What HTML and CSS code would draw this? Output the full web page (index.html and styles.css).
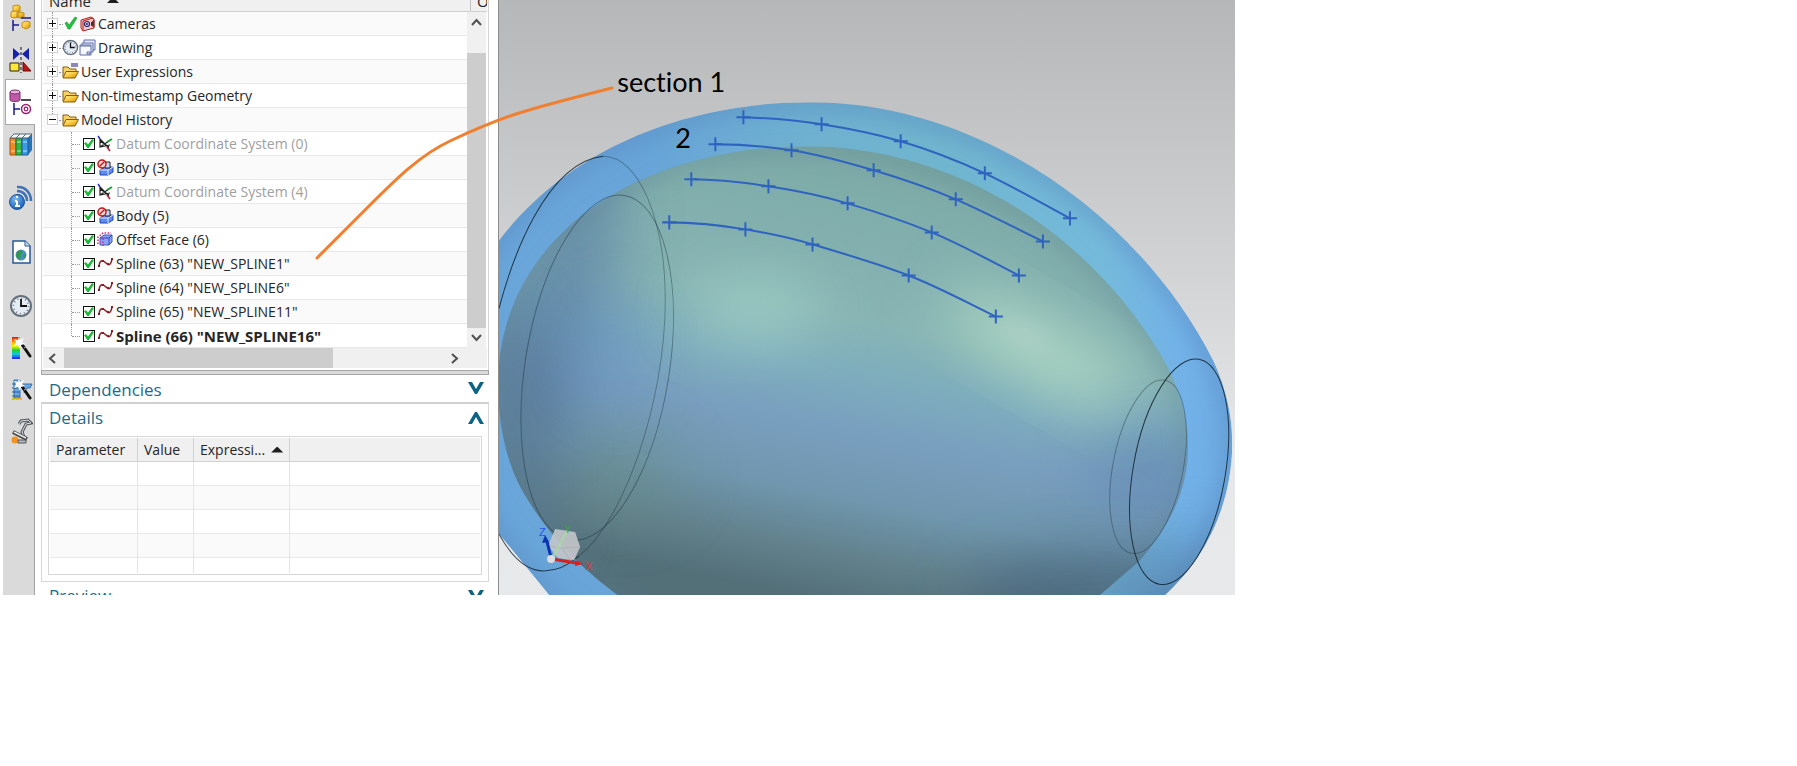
FILE: index.html
```html
<!DOCTYPE html>
<html lang="en">
<head>
<meta charset="utf-8">
<title>Part Navigator</title>
<link rel="stylesheet" href="styles.css">
</head>
<body>
<svg class="defs" width="0" height="0" aria-hidden="true">
  <defs>
    <linearGradient id="gold" x1="0" y1="0" x2="1" y2="1"><stop offset="0" stop-color="#fff0a0"/><stop offset=".5" stop-color="#f8c93c"/><stop offset="1" stop-color="#c98a10"/></linearGradient>
    <radialGradient id="blueball" cx=".4" cy=".3" r=".7"><stop offset="0" stop-color="#7fb8f0"/><stop offset="1" stop-color="#1560b8"/></radialGradient>
    <linearGradient id="rainbow" x1="0" y1="0" x2="0" y2="1"><stop offset="0" stop-color="#f01010"/><stop offset=".25" stop-color="#ffb000"/><stop offset=".42" stop-color="#f4f400"/><stop offset=".6" stop-color="#20d030"/><stop offset=".78" stop-color="#10c8f0"/><stop offset="1" stop-color="#2020e0"/></linearGradient>
    <symbol id="folder" viewBox="0 0 17 17"><path d="M1 14V4h5l2 2h6v3" fill="#f5d36a" stroke="#8a5c10"/><path d="M1 15 4 8.500h12.500L13 15z" fill="url(#gold)" stroke="#8a5c10"/></symbol>
    <symbol id="csys" viewBox="0 0 17 17"><path d="M3 4v8l10-2M3 4l9 9M3 12l9-6M3 6l9 6" fill="none" stroke="#222" stroke-width="1.200"/><path d="M1 1l2 3" stroke="#2233cc" stroke-width="1.500"/><path d="M10 7l5-3" stroke="#18a030" stroke-width="2"/><path d="M10 12l3 4" stroke="#b02020" stroke-width="1.500"/></symbol>
    <symbol id="body" viewBox="0 0 17 17"><path d="M3 11l5-3h8v5l-5 3H3z" fill="#5b8df0" stroke="#2a45a0"/><path d="M3 11h8l5-3M11 11v5" fill="none" stroke="#dce6ff"/><path d="M8 3h5v6H8z" fill="#c4d6ff" stroke="#222"/><circle cx="5" cy="5" r="4" fill="#fbdada" stroke="#c01818" stroke-width="1.500"/><path d="M2.500 7.500l5-5" stroke="#c01818" stroke-width="1.500"/></symbol>
    <symbol id="offset" viewBox="0 0 17 17"><path d="M3 7l4-3h8v7l-3 3H3z" fill="#8ba3f5" stroke="#4055c8"/><path d="M3 7h9v7M12 7l3-3" fill="none" stroke="#3348b8"/><path d="M1 13V6l5-4h8M6 15V6" fill="none" stroke="#e02868" stroke-width="1.500" stroke-dasharray="1.500 1.500"/></symbol>
    <symbol id="spline" viewBox="0 0 17 17"><path d="M2 11C3 4 6 5 9 8s5 2 6-4" fill="none" stroke="#8e1c24" stroke-width="1.500"/><path d="M1 10h2v2H1zM5 5h2v2H5zM10 8h2v2h-2zM14 3h2v2h-2z" fill="#8e1c24"/></symbol>
    <symbol id="clock" viewBox="0 0 24 24"><circle cx="12" cy="12" r="10" fill="#e4ecf4" stroke="#66717c" stroke-width="2"/><circle cx="12" cy="12" r="7.500" fill="none" stroke="#667" stroke-width="1.500" stroke-dasharray="1 2.930"/><path d="M12 5v7h6" fill="none" stroke="#111" stroke-width="1.800"/></symbol>
    <symbol id="tick" viewBox="0 0 17 17"><path d="M3 8l2-1 2 3 6-8 2 1-7 11H6z" fill="#23c03c" stroke="#17952b" stroke-width=".6"/></symbol>
    <symbol id="camera" viewBox="0 0 17 17"><path d="M2 5l10-3 3 2v9L4 16l-2-3z" fill="#f3caca" stroke="#b32020"/><path d="M4 6v9M4 6l10-3M12 8l3-3v7l-3-2" stroke="#b32020" fill="#333"/><circle cx="8" cy="9" r="2.500" fill="#dde" stroke="#302070" stroke-width="1.200"/><circle cx="8" cy="9" r="1" fill="#302070"/></symbol>
    <symbol id="sheets" viewBox="0 0 17 17"><path d="M5 1h11v10H5z" fill="#e9edfb" stroke="#5d6da8"/><path d="M3 4h11v9H3z" fill="#e9edfb" stroke="#5d6da8"/><path d="M1 6h11v10H1z" fill="#f6f8ff" stroke="#5d6da8"/><path d="M1 7h11M8 13h3v2H8z" fill="none" stroke="#5d6da8"/></symbol>
    <symbol id="wand" viewBox="0 0 24 28"><path d="M12 9l9 13" stroke="#111" stroke-width="3" stroke-linecap="round"/><path d="M10 2l1 4 4-2-2 4 3 2-4 1-1 4-2-4-4 1 2-4-2-3 4 1z" fill="#fff"/><path d="M15 14l2-1" stroke="#aaa"/></symbol>
  </defs>
</svg>

<main class="app">
  <nav class="rail" aria-label="Resource bar">
    <div class="rail-group tabs">
      <button class="rail-btn" aria-label="Assembly Navigator"><svg viewBox="0 0 24 28"><g fill="url(#gold)" stroke="#c48a10"><path d="M4 2l4-1 3 1v5l-4 1-3-1z"/><path d="M2 8l4-1 3 1v5l-4 1-3-1zM8 9l4-1 3 1v4l-4 1-3-1z"/><path d="M13 19l4-2 4 1v5l-4 2-4-2z"/></g><path d="M4 16v11M4 21h6M12 14h10" stroke="#1a1a90" stroke-width="1.500"/></svg></button>
      <button class="rail-btn" aria-label="Constraint Navigator"><svg viewBox="0 0 24 28"><path d="M4 2l7 6-7 6zM20 2l-7 6 7 6z" fill="#1620b0"/><path d="M12 1v26" stroke="#111" stroke-dasharray="3 2"/><path d="M1 17h9v8H1z" fill="#ffe838" stroke="#222"/><path d="M14 16l8 9h-8z" fill="#c01414" stroke="#601010"/></svg></button>
      <button class="rail-btn active" aria-label="Part Navigator"><svg viewBox="0 0 24 28"><path d="M1 4v8c1 2 9 2 10 0V4z" fill="#c05aa8" stroke="#7d2a70"/><ellipse cx="6" cy="4" rx="5" ry="2" fill="#e9b4dc" stroke="#7d2a70"/><path d="M12 12h10" stroke="#111" stroke-width="1.500"/><path d="M5 15v12M5 21h6" stroke="#1a1a90" stroke-width="1.500"/><circle cx="17" cy="21" r="4.500" fill="#fff" stroke="#98206c" stroke-width="1.500"/><circle cx="17" cy="21" r="1.800" fill="none" stroke="#98206c" stroke-width="1.200"/></svg></button>
      <button class="rail-btn" aria-label="Reuse Library"><svg viewBox="0 0 24 28"><path d="M1 8l4-4h18v16l-4 5H1z" fill="#2773b8"/><path d="M1 8h6v17H1z" fill="#ee8a28" stroke="#a8540c"/><path d="M7 8h6v17H7z" fill="#35b53f" stroke="#16762a"/><path d="M13 8h6v17h-6z" fill="#3a9ae4" stroke="#1b5c9c"/><path d="M1 8l4-4h6L7 8zM7 8l4-4h6l-4 4zM13 8l4-4h6l-4 4z" fill="#f4f8fa" stroke="#567"/><path d="M2 12h4M8 12h4M14 12h4M2 21h4M8 21h4M14 21h4" stroke="#fff" stroke-opacity=".7"/></svg></button>
    </div>
    <div class="rail-group tools">
      <button class="rail-btn" aria-label="HD3D Tools"><svg viewBox="0 0 24 28"><path d="M8 3c8-1 14 6 14 14M8 7c6 0 10 4 10 10M8 11c4 0 6 3 6 6" fill="none" stroke="#3e72b4" stroke-width="2.500"/><circle cx="8" cy="18" r="7.500" fill="url(#blueball)" stroke="#1a559c"/><path d="M8 17v5M6 22h5M6 17h2M7 13h2" stroke="#fff" stroke-width="2"/></svg></button>
      <button class="rail-btn" aria-label="Web Browser"><svg viewBox="0 0 24 28"><path d="M4 3h12l5 5v17H4z" fill="#fff" stroke="#28579c" stroke-width="1.500"/><path d="M16 3v5h5" fill="#cfe0f6" stroke="#28579c"/><circle cx="12" cy="17" r="5.500" fill="#4b8fd0"/><path d="M8 14l4-2 2 3-3 2 1 3-2 1-3-3zM14 17l3-1-2 5z" fill="#2e9a3c"/></svg></button>
      <button class="rail-btn" aria-label="History"><svg viewBox="0 0 24 28"><use href="#clock" y="2" width="24" height="24"/></svg></button>
    </div>
    <div class="rail-group extras">
      <button class="rail-btn" aria-label="System Materials"><svg viewBox="0 0 24 28"><path d="M3 3h8v22H3z" fill="url(#rainbow)"/><use href="#wand" width="24" height="28"/></svg></button>
      <button class="rail-btn" aria-label="System Visualization"><svg viewBox="0 0 24 28"><path d="M5 4h6v18H5zM13 8h10l-2 4h-3l-3 5" fill="#6ca7df" stroke="#3470b0"/><path d="M3 8h8M3 12h8M3 16h8M3 20h8" stroke="#24619f"/><path d="M3 23h10" stroke="#d8b828" stroke-width="2" stroke-dasharray="3 1"/><use href="#wand" width="24" height="28"/></svg></button>
      <button class="rail-btn" aria-label="Process Studio"><svg viewBox="0 0 24 28"><path d="M10 6l2-3 7-1 3 3-5 1-4 8 2 5" fill="none" stroke="#4c5258" stroke-width="3"/><path d="M10 6l2-3 7-1 3 3-5 1-4 8 2 5" fill="none" stroke="#e4e6e9"/><path d="M4 14l14 7" stroke="#444" stroke-width="4"/><path d="M5 14l12 6" stroke="#eee" stroke-width="1.500"/><circle cx="6" cy="22" r="3.500" fill="#f49220"/><path d="M9 22h8v3H9z" fill="#b8bcc4" stroke="#555"/></svg></button>
    </div>
  </nav>

  <section class="panel">
    <div class="tree-box">
      <div class="tree-head"><span class="name">Name</span><i class="sort"></i><span class="col2">O</span></div>
      <div class="tree-body">
        <ul class="tree">
          <li class="row root first"><button class="exp" aria-label="Expand"></button><svg class="ic"><use href="#tick"/></svg><svg class="ic"><use href="#camera"/></svg><span>Cameras</span></li>
          <li class="row root"><button class="exp" aria-label="Expand"></button><svg class="ic"><use href="#clock"/></svg><svg class="ic"><use href="#sheets"/></svg><span>Drawing</span></li>
          <li class="row root"><button class="exp" aria-label="Expand"></button><svg class="ic"><use href="#folder"/><path d="M9 1h7M9 3h7" stroke="#1b1b70"/></svg><span>User Expressions</span></li>
          <li class="row root"><button class="exp" aria-label="Expand"></button><svg class="ic"><use href="#folder"/></svg><span>Non-timestamp Geometry</span></li>
          <li class="row root end"><button class="exp open" aria-label="Collapse"></button><svg class="ic"><use href="#folder"/></svg><span>Model History</span></li>
          <li class="row child dim"><input type="checkbox" id="f0" checked><svg class="ic"><use href="#csys"/></svg><label for="f0">Datum Coordinate System (0)</label></li>
          <li class="row child"><input type="checkbox" id="f3" checked><svg class="ic"><use href="#body"/></svg><label for="f3">Body (3)</label></li>
          <li class="row child dim"><input type="checkbox" id="f4" checked><svg class="ic"><use href="#csys"/></svg><label for="f4">Datum Coordinate System (4)</label></li>
          <li class="row child"><input type="checkbox" id="f5" checked><svg class="ic"><use href="#body"/></svg><label for="f5">Body (5)</label></li>
          <li class="row child"><input type="checkbox" id="f6" checked><svg class="ic"><use href="#offset"/></svg><label for="f6">Offset Face (6)</label></li>
          <li class="row child"><input type="checkbox" id="f63" checked><svg class="ic"><use href="#spline"/></svg><label for="f63">Spline (63) "NEW_SPLINE1"</label></li>
          <li class="row child"><input type="checkbox" id="f64" checked><svg class="ic"><use href="#spline"/></svg><label for="f64">Spline (64) "NEW_SPLINE6"</label></li>
          <li class="row child"><input type="checkbox" id="f65" checked><svg class="ic"><use href="#spline"/></svg><label for="f65">Spline (65) "NEW_SPLINE11"</label></li>
          <li class="row child end current"><input type="checkbox" id="f66" checked><svg class="ic"><use href="#spline"/></svg><label for="f66">Spline (66) "NEW_SPLINE16"</label></li>
        </ul>
        <div class="vscroll">
          <button aria-label="Scroll up"><svg width="11" height="8"><path d="M1 7l4.500-5L10 7" /></svg></button>
          <i class="thumb"></i>
          <button aria-label="Scroll down"><svg width="11" height="8"><path d="M1 1l4.500 5L10 1"/></svg></button>
        </div>
      </div>
      <div class="hscroll">
        <button aria-label="Scroll left"><svg width="8" height="11"><path d="M7 1L2 5.500 7 10"/></svg></button>
        <i class="thumb"></i>
        <button aria-label="Scroll right"><svg width="8" height="11"><path d="M1 1l5 4.500L1 10"/></svg></button>
      </div>
    </div>
    <div class="splitter"></div>
    <button class="fold deps">Dependencies<svg width="16" height="12"><path d="M0 0h4l4 7 4-7h4L9 12H7z"/></svg></button>
    <section class="details">
      <button class="fold">Details<svg width="16" height="12"><path d="M0 12h4l4-7 4 7h4L9 0H7z"/></svg></button>
      <div class="table-box">
        <table>
          <colgroup><col class="c1"><col class="c2"><col class="c3"><col></colgroup>
          <thead><tr><th>Parameter</th><th>Value</th><th>Expressi...<i class="sort"></i></th><th></th></tr></thead>
          <tbody>
            <tr><td></td><td></td><td></td><td></td></tr>
            <tr><td></td><td></td><td></td><td></td></tr>
            <tr><td></td><td></td><td></td><td></td></tr>
            <tr><td></td><td></td><td></td><td></td></tr>
            <tr class="cut"><td></td><td></td><td></td><td></td></tr>
          </tbody>
        </table>
      </div>
    </section>
    <div class="preview"><button class="fold">Preview<svg width="16" height="12"><path d="M0 0h4l4 7 4-7h4L9 12H7z"/></svg></button></div>
  </section>

  <section class="view" aria-label="Graphics window">
    <svg class="scene" viewBox="500 0 735 594" preserveAspectRatio="xMinYMin slice">
      <defs>
        <linearGradient id="shell" gradientUnits="userSpaceOnUse" x1="500" y1="0" x2="1235" y2="0"><stop offset="0" stop-color="#6aa6da"/><stop offset=".2" stop-color="#68a4d8"/><stop offset=".42" stop-color="#6fb1d0"/><stop offset=".6" stop-color="#70b5ce"/><stop offset=".82" stop-color="#75badb"/><stop offset=".93" stop-color="#72b2e8"/><stop offset="1" stop-color="#6eaae2"/></linearGradient>
        <linearGradient id="core" gradientUnits="userSpaceOnUse" x1="875" y1="130" x2="785" y2="590"><stop offset="0" stop-color="#79a5a1"/><stop offset=".15" stop-color="#7fadaa"/><stop offset=".4" stop-color="#88b5b4"/><stop offset=".52" stop-color="#7eadbd"/><stop offset=".64" stop-color="#799fbf"/><stop offset=".78" stop-color="#7097ae"/><stop offset=".9" stop-color="#62818c"/><stop offset="1" stop-color="#537079"/></linearGradient>
        <filter id="b14" x="-50%" y="-50%" width="200%" height="200%"><feGaussianBlur stdDeviation="10"/></filter>
        <filter id="b30" x="-80%" y="-80%" width="260%" height="260%"><feGaussianBlur stdDeviation="30"/></filter>
        <path id="outerShape" d="M480 266L500 240C573 145 690 102 812 102C980 102 1140 215 1213 360C1226 388 1232 415 1232 442C1232 510 1200 562 1165 594L1100 640H600L550 594Q523 561 500 533L480 500Z"/>
        <path id="innerShape" d="M499 385C499 235 640 146 807 146C950 146 1085 228 1160 353Q1188 400 1188 445Q1188 495 1157 537Q1148 551 1137 562L1100 594L1050 640H670L618 594Q580 566 553 533Q535 511 521 486Q500 445 499 385Z"/>
        <clipPath id="outerClip"><use href="#outerShape"/></clipPath>
        <clipPath id="innerClip"><use href="#innerShape"/></clipPath>
      </defs>
      <g clip-path="url(#outerClip)">
        <use href="#outerShape" fill="url(#shell)"/>
        <use href="#outerShape" fill="none" stroke="#5688c0" stroke-width="16" stroke-opacity=".55" filter="url(#b14)"/>
        <path d="M1080 660V540H1240V660z" fill="#4e7396" opacity=".5" filter="url(#b30)"/>
      </g>
      <g clip-path="url(#innerClip)">
        <use href="#innerShape" fill="url(#core)"/>
        <ellipse cx="620" cy="475" rx="60" ry="40" fill="#688c84" opacity=".5" filter="url(#b30)"/>
        <ellipse cx="560" cy="300" rx="50" ry="150" fill="#5b80a6" opacity=".7" transform="rotate(14 560 300)" filter="url(#b30)"/>
        <ellipse cx="520" cy="430" rx="35" ry="130" fill="#56768f" opacity=".75" transform="rotate(-8 520 430)" filter="url(#b30)"/>
        <ellipse cx="615" cy="350" rx="32" ry="50" fill="#6c98c6" opacity=".6" filter="url(#b30)"/>
        <ellipse cx="1150" cy="470" rx="60" ry="45" fill="#6288b4" opacity=".7" filter="url(#b30)"/>
        <ellipse cx="755" cy="310" rx="65" ry="28" fill="#a4d4c8" opacity=".8" filter="url(#b30)"/>
        <ellipse cx="1040" cy="350" rx="105" ry="26" fill="#b2dcc6" transform="rotate(30 1040 350)" filter="url(#b30)"/>
        <ellipse cx="1025" cy="335" rx="30" ry="10" fill="#b4d0c8" opacity=".6" transform="rotate(28 1025 335)" filter="url(#b14)"/>
        <ellipse cx="1110" cy="600" rx="150" ry="45" fill="#43607a" opacity=".7" filter="url(#b30)"/>
        <use href="#innerShape" fill="none" stroke="#567a8c" stroke-width="12" stroke-opacity=".4" filter="url(#b14)"/>
      </g>
      <g fill="none" stroke="#12242f" stroke-width="1">
        <path d="M500 308C512 262 546 162 604 156" opacity=".85"/>
        <path d="M604 156C640 156 666 220 666 300C666 400 625 520 580 555" opacity=".35"/>
        <path d="M500 533Q520 570 545 570Q563 570 580 555" opacity=".8"/>
        <ellipse cx="598" cy="367" rx="72" ry="174" transform="rotate(9 598 367)" opacity=".4"/>
        <ellipse cx="1179" cy="471" rx="46" ry="114" transform="rotate(10 1179 471)" opacity=".85"/>
        <ellipse cx="1148" cy="466" rx="35" ry="88" transform="rotate(11 1148 466)" opacity=".35"/>
      </g>
      <g fill="none" stroke="#2f63c0" stroke-width="2">
        <path d="M744 117C770 118 796 120 822 124S874 133 901 141S957 160 985 173S1042 203 1070 218"/>
        <path d="M716 144C741 144 766 146 792 150S847 162 874 170S928 187 956 199S1014 227 1043 241"/>
        <path d="M692 179C718 179 743 182 769 186S821 195 848 203S903 220 932 232S990 260 1019 275"/>
        <path d="M670 222C695 222 722 225 746 229S786 236 813 244S878 263 909 275S967 302 996 316"/>
        <path d="M737 117h14m-7-7v14M815 124h14m-7-7v14M894 141h14m-7-7v14M978 173h14m-7-7v14M1063 218h14m-7-7v14M709 144h14m-7-7v14M785 150h14m-7-7v14M867 170h14m-7-7v14M949 199h14m-7-7v14M1036 241h14m-7-7v14M685 179h14m-7-7v14M762 186h14m-7-7v14M841 203h14m-7-7v14M925 232h14m-7-7v14M1012 275h14m-7-7v14M663 222h14m-7-7v14M739 229h14m-7-7v14M806 244h14m-7-7v14M902 275h14m-7-7v14M989 316h14m-7-7v14"/>
      </g>
      <path d="M556 528l20 3 5 15-6 13-16-2-10-12z" fill="#c3c6c9" opacity=".9"/>
      <path d="M549 545l14 2 18-1M563 547l8 12" fill="none" stroke="#b0b4b6"/>
      <path d="M554 556l14-26" stroke="#a8d8a4" stroke-width="2"/>
      <path d="M552 557l-4-16" stroke="#0b35b0" stroke-width="3"/><path d="M546 534l-3 8 7-1z" fill="#0b35b0"/>
      <path d="M553 558l24 4" stroke="#d52222" stroke-width="3"/><path d="M584 563l-8-4v6z" fill="#d52222"/>
      <circle cx="552" cy="558" r="4" fill="#dcdcdc"/>
      <g class="axis"><text x="540" y="535" fill="#2456e8">Z</text><text x="565" y="532" fill="#41a041">Y</text><text x="586" y="569" fill="#d83c3c">X</text></g>
      <g class="note"><text x="618" y="92">section 1</text><text x="676" y="148">2</text></g>
    </svg>
  </section>

  <svg class="leader" width="620" height="270" aria-hidden="true"><path d="M317 258L370 205C395 180 420 155 450 141S490 123 510 116S580 96 612 88"/></svg>
</main>
</body>
</html>
```
FILE: styles.css
```css
* { box-sizing: border-box; }
body { margin: 0; padding-right: 562px; background: #fff; color: #262626; font: 14px/24px "Open Sans", "Noto Sans", sans-serif; }
button { padding: 0; border: 0; background: none; font: inherit; color: inherit; }
.defs { position: absolute; }
.app { position: relative; display: flex; padding-left: 3px; overflow: hidden; }

.rail { width: 32px; flex: none; display: flex; flex-direction: column; padding-top: 4px; background: #dadada; border-right: 1px solid #a0a0a0; }
.rail-group { display: flex; flex-direction: column; gap: 14px; }
.tools { gap: 26px; margin-top: 26px; }
.extras { margin-top: 14px; }
.rail-btn { height: 28px; padding-left: 6px; display: flex; }
.rail-btn svg { width: 24px; height: 28px; }
.rail-btn.active { height: 46px; margin: -9px -1px -9px 2px; padding: 9px 0 9px 3px; background: #fff; border: solid #a8a8a8; border-width: 1px 0 1px 1px; align-items: center; }

.panel { width: 448px; flex: none; margin-left: 6px; display: flex; flex-direction: column; }
.tree-box { border: solid #d4d4d4; border-width: 0 1px; padding: 0 1px 2px; }
.tree-head { height: 12px; display: flex; align-items: flex-end; background: #f0f0f0; border-bottom: 1px solid #d0d0d0; overflow: hidden; padding-left: 6px; font-size: 15px; }
.tree-head .name { width: 58px; height: 22px; }
.sort { display: inline-block; width: 12px; height: 6px; background: #1e1e1e; clip-path: polygon(50% 0, 100% 100%, 0 100%); }
.tree-head .sort { margin-bottom: 8px; }
.tree-head .col2 { width: 17px; height: 22px; margin-left: auto; padding-left: 6px; border-left: 1px solid #c4c4c4; overflow: hidden; }
.tree-body { display: flex; }
.tree { flex: 1; list-style: none; margin: 0; padding: 0; }
.row { position: relative; height: 24px; display: flex; align-items: center; border-bottom: 1px solid #e8e8e8; white-space: nowrap; }
.row:nth-child(odd) { background: #fafafa; }
.row span, .row label { padding-left: 2px; line-height: 22px; }
.row.root { padding-left: 4px; }
.row.child { padding-left: 40px; }
.row.dim label { color: #a0a0a0; }
.row.current { font-size: 15px; font-weight: 700; }
.row::before { content: ""; position: absolute; left: 9px; top: 0; height: 24px; border-left: 1px dotted #999; }
.row::after { content: ""; position: absolute; left: 16px; top: 12px; width: 4px; border-top: 1px dotted #999; }
.row.child::before { left: 28px; }
.row.child::after { left: 29px; width: 8px; }
.row.end::before { height: 12px; }
.exp { position: relative; z-index: 1; width: 11px; height: 11px; margin-right: 4px; background: linear-gradient(#111, #111) center / 7px 1px no-repeat, linear-gradient(#111, #111) center / 1px 7px no-repeat, #fff; border: 1px solid #d0d0d0; }
.exp.open { background: linear-gradient(#111, #111) center / 7px 1px no-repeat, #fff; }
.ic { width: 17px; height: 17px; flex: none; }
.row.child .ic { margin-left: 2px; }
input[type="checkbox"] { appearance: none; width: 12px; height: 12px; margin: 0; border: 1px solid #111; background: #fff; display: grid; place-items: center; }
input[type="checkbox"]:checked::before { content: ""; width: 10px; height: 9px; background: #1fb83a; clip-path: polygon(0 45%, 22% 35%, 40% 60%, 80% 0, 100% 12%, 50% 100%, 32% 100%); }
.vscroll { width: 20px; display: flex; flex-direction: column; background: #f0f0f0; border-right: 1px solid #fff; }
.vscroll button { height: 20px; display: grid; place-items: center; }
.vscroll button:first-child { margin-bottom: 21px; }
.thumb { background: #cdcdcd; }
.vscroll .thumb { flex: 1; }
.vscroll svg, .hscroll svg { fill: none; stroke: #505050; stroke-width: 2; }
.hscroll { height: 20px; display: flex; background: #f0f0f0; }
.hscroll button { width: 21px; display: grid; place-items: center; }
.hscroll button:first-child { padding-right: 4px; }
.hscroll .thumb { width: 269px; }
.hscroll button:last-child { margin-left: auto; margin-right: 22px; }
.splitter { height: 5px; background: #dadada; border: 1px solid #a6a6a6; }
.fold { width: 100%; height: 27px; display: flex; align-items: center; justify-content: space-between; padding: 3px 5px 0 8px; font-size: 17px; color: #1b6a8c; text-align: left; }
.fold svg { fill: #0d6384; }
.deps svg { margin-bottom: 4px; }
.details { border: 1px solid #d8d8d8; border-top: 2px solid #d0d0d0; padding-bottom: 6px; }
.details .fold { padding: 0 4px 0 7px; }
.table-box { margin: 5px 6px 0; padding: 1px; border: 1px solid #d8d8d8; }
table { width: 100%; border-collapse: separate; border-spacing: 0; table-layout: fixed; }
.c1 { width: 88px; }
.c2 { width: 56px; }
.c3 { width: 96px; }
th { height: 24px; padding: 0 0 0 6px; background: #f0f0f0; border-right: 1px solid #d0d0d0; border-bottom: 1px solid #d0d0d0; font-weight: 400; line-height: 22px; text-align: left; white-space: nowrap; }
th .sort { margin: 0 0 2px 6px; }
td { height: 24px; padding: 0; border-right: 1px solid #e4e4e4; border-bottom: 1px solid #e8e8e8; }
tr:nth-child(even) td { background: #fafafa; }
.cut td { height: 15px; border-bottom: 0; }
th:last-child, td:last-child { border-right: 0; }
.preview { height: 13px; overflow: hidden; }
.preview .fold { padding-top: 0; }

.view { flex: 1; position: relative; margin-left: 9px; border-left: 1px solid #8c8c8c; overflow: hidden; background: linear-gradient(#b6b7b9, #d5d6d7 50%, #e6e7e8 75%, #e8e9eb); }
.scene { position: absolute; left: 0; top: 0; width: 100%; height: 100%; }
.axis { font: 11px "Liberation Sans", sans-serif; }
.note { font: 27px Lato, "Open Sans", sans-serif; font-variant-ligatures: none; fill: #000; }
.leader { position: absolute; left: 0; top: 0; fill: none; stroke: #f08030; stroke-width: 3; stroke-linecap: round; pointer-events: none; }
```
